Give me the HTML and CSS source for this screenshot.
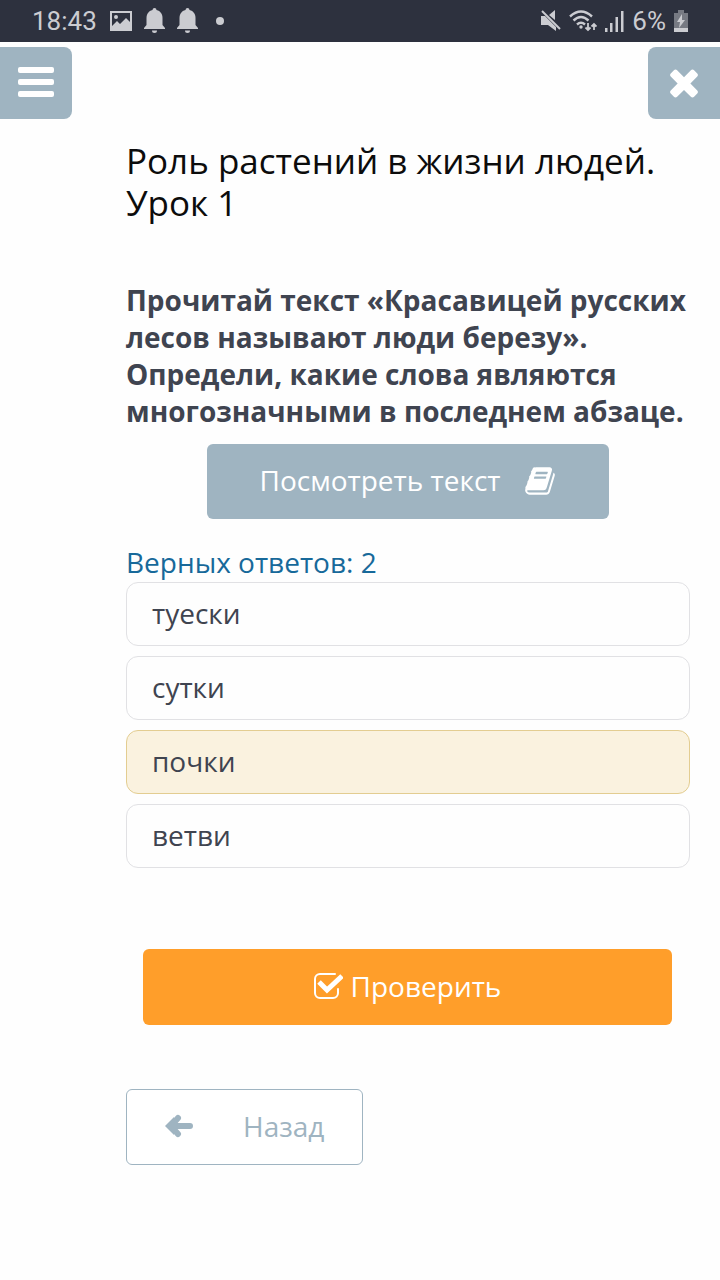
FILE: index.html
```
<!DOCTYPE html>
<html lang="ru">
<head>
    <meta charset="UTF-8">
    <meta name="viewport" content="width=device-width, initial-scale=1.0">
    <title>Роль растений в жизни людей. Урок 1</title>
    <link rel="stylesheet" href="styles.css">
</head>
<body>

<div class="status-bar">
    <div class="status-left">
        <span class="clock">18:43</span>
        <svg width="22" height="20" viewBox="0 0 22 20"><path fill="currentColor" fill-rule="evenodd" d="M0 0h22v20H0zM2 2v13l5-5 3 3 6-6 4 4V2zM6 4a2 2 0 1 1 0 4 2 2 0 0 1 0-4z"/></svg>
        <svg width="21" height="26" viewBox="0 0 21 26"><path fill="currentColor" d="M10.500 0a2 2 0 0 1 2 2c4 1 6 4 6 8v7l2.500 3v1H0v-1l2.500-3v-7c0-4 2-7 6-8a2 2 0 0 1 2-2zM8 22.500h5a2.500 2.500 0 0 1-5 0z"/></svg>
        <svg width="21" height="26" viewBox="0 0 21 26"><path fill="currentColor" d="M10.500 0a2 2 0 0 1 2 2c4 1 6 4 6 8v7l2.500 3v1H0v-1l2.500-3v-7c0-4 2-7 6-8a2 2 0 0 1 2-2zM8 22.500h5a2.500 2.500 0 0 1-5 0z"/></svg>
        <span class="dot"></span>
    </div>
    <div class="status-right">
        <svg width="20" height="22" viewBox="0 0 20 22"><path fill="currentColor" d="M0 6h4l11 11v4l-8-6H0zM14 0v10L8 5z"/><path stroke="currentColor" stroke-width="2" d="M1 1l18 18"/></svg>
        <svg width="28" height="22" viewBox="0 0 28 22" fill="none" stroke="currentColor"><path stroke-width="2.400" d="M1 6.500q11-10 22 0M4.500 10.500q7.500-7 15 0M8 14.500q4-3.500 8 0"/><circle cx="12" cy="17" r="1.700" fill="currentColor" stroke="none"/><path stroke-width="1.800" d="M19 13v7M16.500 17.500l2.500 2.500 2.500-2.500M25 20v-6M22.500 16.500l2.500-2.500 2.500 2.500"/></svg>
        <svg width="19" height="21" viewBox="0 0 19 21"><path fill="currentColor" d="M0 17h2.500v4H0zM5 12h2.500v9H5zM10.500 6H13v15h-2.500zM16 0h2.500v21H16z"/></svg>
        <span class="battery-level">6%</span>
        <svg width="14" height="22" viewBox="0 0 14 22"><path fill="#777a83" d="M4 0h6v3h4v19H0V3h4z"/><path fill="currentColor" d="M0 18h14v4H0zM8 4l-5 8h3l-1 6 6-8H8z"/></svg>
    </div>
</div>

<div class="toolbar">
    <button class="tool tool-menu" type="button" aria-label="Меню">
        <svg width="36" height="30" viewBox="0 0 36 30" fill="currentColor"><rect width="36" height="6" rx="2"/><rect y="12" width="36" height="6" rx="2"/><rect y="24" width="36" height="6" rx="2"/></svg>
    </button>
    <button class="tool tool-close" type="button" aria-label="Закрыть">
        <svg width="42" height="42" viewBox="0 0 1792 1792"><path fill="currentColor" d="M1490 1322q0 40-28 68l-136 136q-28 28-68 28t-68-28l-294-294-294 294q-28 28-68 28t-68-28l-136-136q-28-28-28-68t28-68l294-294-294-294q-28-28-28-68t28-68l136-136q28-28 68-28t68 28l294 294 294-294q28-28 68-28t68 28l136 136q28 28 28 68t-28 68l-294 294 294 294q28 28 28 68z"/></svg>
    </button>
</div>

<main class="lesson">
    <h1>Роль растений в жизни людей. Урок 1</h1>

    <p class="question" id="question">Прочитай текст «Красавицей русских лесов называют люди березу». Определи, какие слова являются многозначными в последнем абзаце.</p>

    <button class="btn btn-text" type="button">
        Посмотреть текст
        <svg width="32" height="32" viewBox="0 0 1792 1792"><path fill="currentColor" d="M1703 478q40 57 18 129l-275 906q-19 64-76.500 107.500t-122.500 43.500h-923q-77 0-148.500-53.500t-99.500-131.500q-24-67-2-127 0-4 3-27t4-37q1-8-3-21.500t-3-19.500q2-11 8-21t16.500-23.500 16.500-23.500q23-38 45-91.500t30-91.500q3-10 .5-30t-.5-28q3-11 17-28t17-23q21-36 42-92t25-90q1-9-2.500-32t.5-28q4-13 22-30.500t22-22.500q19-26 42.500-84.500t27.500-96.500q1-8-3-25.500t-2-26.500q2-8 9-18t18-23 17-21q8-12 16.500-30.500t15-35 16-36 19.500-32 26.500-23.500 36-11.500 47.500 5.500l-1 3q38-9 51-9h761q74 0 114 56t18 130l-274 906q-36 119-71.500 153.500t-128.500 34.500h-869q-27 0-38 15-11 16-1 43 24 70 144 70h923q29 0 56-15.500t35-41.500l300-987q7-22 5-57 38 15 59 43zm-1064 2q-4 13 2 22.500t20 9.500h608q13 0 25.500-9.500t16.500-22.500l21-64q4-13-2-22.500t-20-9.500h-608q-13 0-25.500 9.500t-16.500 22.500zm-83 256q-4 13 2 22.500t20 9.500h608q13 0 25.500-9.500t16.500-22.500l21-64q4-13-2-22.500t-20-9.500h-608q-13 0-25.500 9.500t-16.500 22.500z"/></svg>
    </button>

    <p class="hint">Верных ответов: 2</p>

    <div class="answers" role="group" aria-labelledby="question">
        <div class="answer">
            <input type="checkbox" id="answer1">
            <label for="answer1">туески</label>
        </div>
        <div class="answer">
            <input type="checkbox" id="answer2">
            <label for="answer2">сутки</label>
        </div>
        <div class="answer">
            <input type="checkbox" id="answer3" checked>
            <label for="answer3">почки</label>
        </div>
        <div class="answer">
            <input type="checkbox" id="answer4">
            <label for="answer4">ветви</label>
        </div>
    </div>

    <button class="btn btn-check" type="button">
        <svg width="29" height="28" viewBox="0 0 29 28" fill="none" stroke="currentColor"><path stroke-width="2" stroke-linecap="round" d="M21 2H6a5 5 0 0 0-5 5v14a5 5 0 0 0 5 5h13a5 5 0 0 0 5-5v-4"/><path stroke-width="5" d="M5 10l8 8L28 4"/></svg>
        Проверить
    </button>

    <button class="btn btn-back" type="button">
        <svg width="28" height="24" viewBox="0 0 28 24" fill="none" stroke="currentColor" stroke-linecap="round" stroke-linejoin="round"><path stroke-width="6" d="M13 4l-7 8 7 8M7 12h18"/><path fill="currentColor" stroke="none" d="M0 12l9-9v18z"/></svg>
        Назад
    </button>
</main>

</body>
</html>
```
FILE: styles.css
```
body {
    margin: 0;
    background-color: #fefefe;
    color: #3f4450;
    font-family: "Open Sans", "Noto Sans", sans-serif;
    font-size: 28px;
    line-height: 37px;
}
svg {
    display: block;
    flex-shrink: 0;
}
.status-bar {
    display: flex;
    justify-content: space-between;
    height: 42px;
    padding: 0 32px;
    background-color: #2d313e;
    color: #cbccd1;
    font-family: Roboto, sans-serif;
    font-size: 26px;
}
.status-left, .status-right {
    display: flex;
    align-items: center;
}
.status-left {
    gap: 12px;
}
.status-right {
    gap: 8px;
}
.clock {
    margin-right: 1px;
}
.dot {
    width: 8px;
    height: 8px;
    margin-left: 6px;
    border-radius: 50%;
    background-color: currentColor;
}
.toolbar {
    display: flex;
    justify-content: space-between;
    padding-top: 5px;
}
.tool {
    display: flex;
    align-items: center;
    justify-content: center;
    box-sizing: border-box;
    width: 72px;
    height: 72px;
    padding: 0 0 3px;
    border: none;
    background-color: #9fb4c1;
    color: white;
    cursor: pointer;
}
.tool-menu {
    border-radius: 0 8px 8px 0;
}
.tool-close {
    border-radius: 8px 0 0 8px;
}
.lesson {
    display: flex;
    flex-direction: column;
    padding: 21px 30px 40px 126px;
}
h1 {
    margin: 0 0 58px;
    color: #0c0c0c;
    font-size: 35px;
    font-weight: normal;
    line-height: 42px;
}
.question {
    margin: 0 0 14px;
    font-weight: bold;
}
.btn {
    display: flex;
    align-items: center;
    justify-content: center;
    box-sizing: border-box;
    min-height: 76px;
    padding: 0 0 2px;
    border: none;
    border-radius: 6px;
    color: white;
    font: inherit;
    cursor: pointer;
}
.btn-text {
    align-self: center;
    gap: 24px;
    min-height: 75px;
    padding: 0 53px 2px;
    background-color: #9fb4c1;
}
.hint {
    margin: 25px 0 1px;
    color: #17699a;
}
.answers {
    display: flex;
    flex-direction: column;
    gap: 10px;
}
.answer input {
    position: absolute;
    opacity: 0;
}
.answer label {
    display: block;
    padding: 12px 25px 13px;
    border: 1px solid #e1e1e4;
    border-radius: 12px;
    cursor: pointer;
}
.answer input:checked + label {
    border-color: #e3cd91;
    background-color: #faf2df;
}
.btn-check {
    gap: 8px;
    margin: 81px 18px 64px 17px;
    background-color: #ff9e2a;
}
.btn-back {
    align-self: flex-start;
    gap: 50px;
    padding: 0 38px 2px;
    border: 1px solid #9fb4c1;
    background-color: white;
    color: #9fb4c1;
}
```
